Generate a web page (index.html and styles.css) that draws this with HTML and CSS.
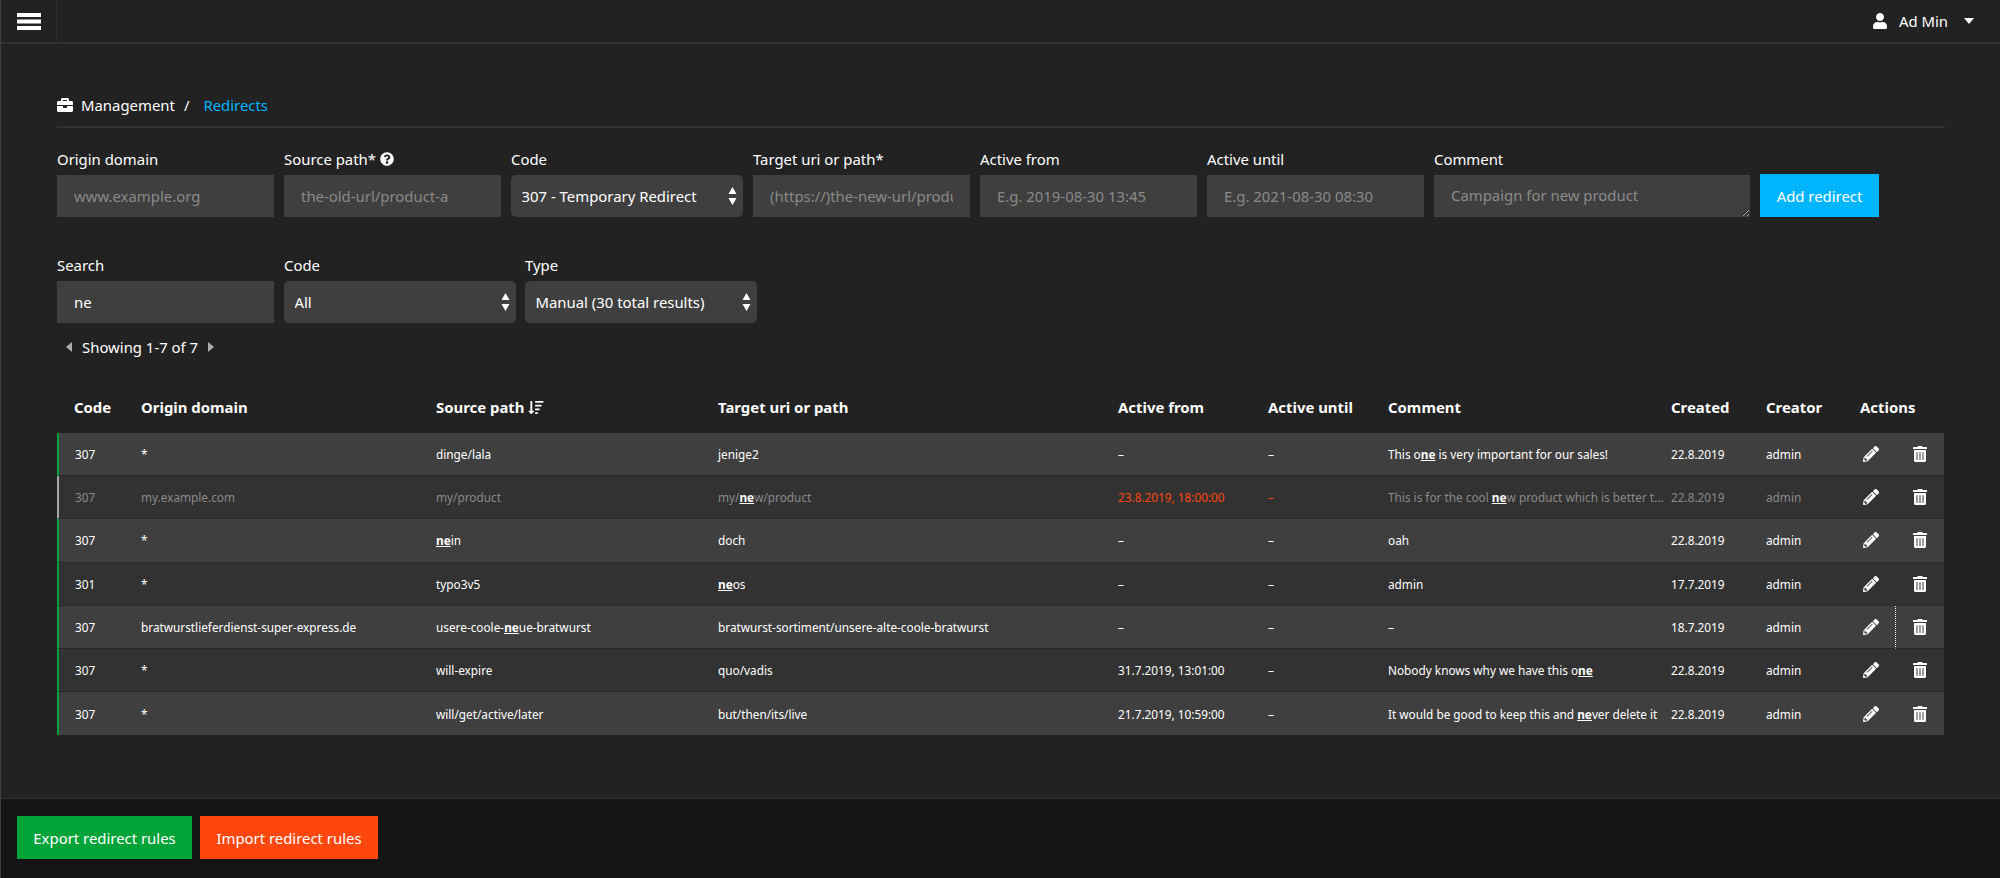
FILE: index.html
```html
<!DOCTYPE html>
<html lang="en">
<head>
<meta charset="utf-8">
<title>Redirects</title>
<link rel="stylesheet" href="styles.css">
</head>
<body>
<svg class="sprite" aria-hidden="true">
  <symbol id="i-pencil" viewBox="0 0 512 512"><path d="M497.9 142.1l-46.1 46.1c-4.7 4.7-12.3 4.7-17 0l-111-111c-4.7-4.7-4.7-12.3 0-17l46.1-46.1c18.7-18.7 49.1-18.7 67.9 0l60.1 60.1c18.8 18.7 18.8 49.1 0 67.9zM284.2 99.8L21.6 362.4.4 483.9c-2.9 16.4 11.4 30.6 27.8 27.8l121.5-21.3 262.6-262.6c4.7-4.7 4.7-12.3 0-17l-111-111c-4.8-4.7-12.4-4.7-17.1 0zM124.1 339.9c-5.5-5.5-5.5-14.3 0-19.8l154-154c5.5-5.5 14.3-5.5 19.8 0s5.5 14.3 0 19.8l-154 154c-5.5 5.5-14.3 5.5-19.8 0zM88 424h48v36.3l-64.5 11.3-31.1-31.1L51.7 376H88v48z"/></symbol>
  <symbol id="i-trash" viewBox="0 0 448 512"><path d="M32 464a48 48 0 0 0 48 48h288a48 48 0 0 0 48-48V128H32zm272-256a16 16 0 0 1 32 0v224a16 16 0 0 1-32 0zm-96 0a16 16 0 0 1 32 0v224a16 16 0 0 1-32 0zm-96 0a16 16 0 0 1 32 0v224a16 16 0 0 1-32 0zM432 32H312l-9.4-18.7A24 24 0 0 0 281.1 0H166.8a23.72 23.72 0 0 0-21.4 13.3L136 32H16A16 16 0 0 0 0 48v32a16 16 0 0 0 16 16h416a16 16 0 0 0 16-16V48a16 16 0 0 0-16-16z"/></symbol>
  <symbol id="i-stepper" viewBox="0 0 8 18"><path d="M4 0l4 7H0zM4 18L0 11h8z"/></symbol>
</svg>
<header class="topbar">
  <button class="menu-btn" type="button" aria-label="Menu">
    <svg class="menu-icon" viewBox="0 0 24 17"><rect width="24" height="4" y="0"/><rect width="24" height="4" y="6.5"/><rect width="24" height="4" y="13"/></svg>
  </button>
  <div class="user">
    <svg class="user-icon" viewBox="0 0 448 512"><path d="M224 256c70.7 0 128-57.3 128-128S294.7 0 224 0 96 57.3 96 128s57.3 128 128 128zm89.6 32h-16.7c-22.2 10.2-46.9 16-72.9 16s-50.6-5.8-72.9-16h-16.7C60.2 288 0 348.2 0 422.4V464c0 26.5 21.5 48 48 48h352c26.5 0 48-21.5 48-48v-41.6c0-74.2-60.2-134.4-134.4-134.4z"/></svg>
    <span class="user-name">Ad Min</span>
    <svg class="user-caret" viewBox="0 0 10 6"><path d="M0 0h10L5 6z"/></svg>
  </div>
</header>

<main class="content">
  <nav class="crumbs">
    <svg class="crumb-icon" viewBox="0 0 512 512"><path d="M320 336c0 8.84-7.16 16-16 16h-96c-8.84 0-16-7.16-16-16v-48H0v144c0 25.6 22.4 48 48 48h416c25.6 0 48-22.4 48-48V288H320v48zm144-208h-80V80c0-25.6-22.4-48-48-48H176c-25.6 0-48 22.4-48 48v48H48c-25.6 0-48 22.4-48 48v80h512v-80c0-25.6-22.4-48-48-48zm-144 0H192V96h128v32z"/></svg>
    <span class="crumb">Management</span>
    <span class="crumb-sep">/</span>
    <a class="crumb-link" href="#">Redirects</a>
  </nav>

  <form class="form-row add-row">
    <label class="field w-217"><span class="field-label">Origin domain</span><input class="input" placeholder="www.example.org"></label>
    <label class="field w-217"><span class="field-label">Source path* <svg class="help-icon" viewBox="0 0 512 512"><path d="M504 256c0 136.997-111.043 248-248 248S8 392.997 8 256C8 119.083 119.043 8 256 8s248 111.083 248 248zM262.655 90c-54.497 0-89.255 22.957-116.549 63.758-3.536 5.286-2.353 12.415 2.715 16.258l34.699 26.31c5.205 3.947 12.621 3.008 16.665-2.122 17.864-22.658 30.113-35.797 57.303-35.797 20.429 0 45.698 13.148 45.698 32.958 0 14.976-12.363 22.667-32.534 33.976C247.128 238.528 216 254.941 216 296v4c0 6.627 5.373 12 12 12h56c6.627 0 12-5.373 12-12v-1.333c0-28.462 83.186-29.647 83.186-106.667 0-58.002-60.165-102-116.531-102zM256 338c-25.365 0-46 20.635-46 46 0 25.364 20.635 46 46 46s46-20.636 46-46c0-25.365-20.635-46-46-46z"/></svg></span><input class="input" placeholder="the-old-url/product-a"></label>
    <label class="field w-232"><span class="field-label">Code</span>
      <span class="select-wrap"><select class="select"><option>307 - Temporary Redirect</option></select><svg class="stepper"><use href="#i-stepper"/></svg></span></label>
    <label class="field w-217"><span class="field-label">Target uri or path*</span><input class="input" placeholder="(https://)the-new-url/product-a"></label>
    <label class="field w-217"><span class="field-label">Active from</span><input class="input" placeholder="E.g. 2019-08-30 13:45"></label>
    <label class="field w-217"><span class="field-label">Active until</span><input class="input" placeholder="E.g. 2021-08-30 08:30"></label>
    <label class="field w-316"><span class="field-label">Comment</span><textarea class="input textarea" placeholder="Campaign for new product"></textarea></label>
    <button class="btn btn-blue" type="button">Add redirect</button>
  </form>

  <form class="form-row filter-row">
    <label class="field w-217"><span class="field-label">Search</span><input class="input" value="ne"></label>
    <label class="field w-232 tight"><span class="field-label">Code</span>
      <span class="select-wrap"><select class="select"><option>All</option></select><svg class="stepper"><use href="#i-stepper"/></svg></span></label>
    <label class="field w-232"><span class="field-label">Type</span>
      <span class="select-wrap"><select class="select"><option>Manual (30 total results)</option></select><svg class="stepper"><use href="#i-stepper"/></svg></span></label>
  </form>

  <div class="pager">
    <svg class="pager-arrow" viewBox="0 0 6 10"><path d="M6 0v10L0 5z"/></svg>
    <span class="pager-text">Showing 1-7 of 7</span>
    <svg class="pager-arrow" viewBox="0 0 6 10"><path d="M0 0v10l6-5z"/></svg>
  </div>

  <table class="table">
    <colgroup>
      <col class="c-code"><col class="c-origin"><col class="c-source"><col class="c-target"><col class="c-from"><col class="c-until"><col class="c-comment"><col class="c-created"><col class="c-creator"><col class="c-edit"><col class="c-del">
    </colgroup>
    <thead>
      <tr>
        <th class="first">Code</th>
        <th>Origin domain</th>
        <th>Source path <svg class="sort-icon" viewBox="0 0 512 512"><path d="M187.298 395.314l-79.984 80.002c-6.248 6.247-16.383 6.245-22.627 0L4.705 395.314C-5.365 385.244 1.807 368 16.019 368H64V48c0-8.837 7.163-16 16-16h32c8.837 0 16 7.163 16 16v320h47.984c14.241 0 21.363 17.264 11.314 27.314zM240 96h256c8.837 0 16-7.163 16-16V48c0-8.837-7.163-16-16-16H240c-8.837 0-16 7.163-16 16v32c0 8.837 7.163 16 16 16zm-16 112v-32c0-8.837 7.163-16 16-16h192c8.837 0 16 7.163 16 16v32c0 8.837-7.163 16-16 16H240c-8.837 0-16-7.163-16-16zm0 256v-32c0-8.837 7.163-16 16-16h64c8.837 0 16 7.163 16 16v32c0 8.837-7.163 16-16 16h-64c-8.837 0-16-7.163-16-16zm0-128v-32c0-8.837 7.163-16 16-16h128c8.837 0 16 7.163 16 16v32c0 8.837-7.163 16-16 16H240c-8.837 0-16-7.163-16-16z"/></svg></th>
        <th>Target uri or path</th>
        <th>Active from</th>
        <th>Active until</th>
        <th>Comment</th>
        <th>Created</th>
        <th>Creator</th>
        <th colspan="2">Actions</th>
      </tr>
    </thead>
    <tbody>
      <tr class="row">
        <td class="first">307</td><td>*</td><td>dinge/lala</td><td>jenige2</td><td>–</td><td>–</td>
        <td class="comment">This o<mark class="hit">ne</mark> is very important for our sales!</td><td>22.8.2019</td><td>admin</td>
        <td class="action edit"><svg class="pencil"><use href="#i-pencil"/></svg></td>
        <td class="action del"><svg class="trash"><use href="#i-trash"/></svg></td>
      </tr>
      <tr class="row inactive">
        <td class="first">307</td><td>my.example.com</td><td>my/product</td><td>my/<mark class="hit">ne</mark>w/product</td><td class="expired">23.8.2019, 18:00:00</td><td class="expired">–</td>
        <td class="comment"><div class="clip">This is for the cool <mark class="hit">ne</mark>w product which is better than the old one</div></td><td>22.8.2019</td><td>admin</td>
        <td class="action edit"><svg class="pencil"><use href="#i-pencil"/></svg></td>
        <td class="action del"><svg class="trash"><use href="#i-trash"/></svg></td>
      </tr>
      <tr class="row">
        <td class="first">307</td><td>*</td><td><mark class="hit">ne</mark>in</td><td>doch</td><td>–</td><td>–</td>
        <td class="comment">oah</td><td>22.8.2019</td><td>admin</td>
        <td class="action edit"><svg class="pencil"><use href="#i-pencil"/></svg></td>
        <td class="action del"><svg class="trash"><use href="#i-trash"/></svg></td>
      </tr>
      <tr class="row">
        <td class="first">301</td><td>*</td><td>typo3v5</td><td><mark class="hit">ne</mark>os</td><td>–</td><td>–</td>
        <td class="comment">admin</td><td>17.7.2019</td><td>admin</td>
        <td class="action edit"><svg class="pencil"><use href="#i-pencil"/></svg></td>
        <td class="action del"><svg class="trash"><use href="#i-trash"/></svg></td>
      </tr>
      <tr class="row">
        <td class="first">307</td><td>bratwurstlieferdienst-super-express.de</td><td>usere-coole-<mark class="hit">ne</mark>ue-bratwurst</td><td>bratwurst-sortiment/unsere-alte-coole-bratwurst</td><td>–</td><td>–</td>
        <td class="comment">–</td><td>18.7.2019</td><td>admin</td>
        <td class="action edit"><svg class="pencil"><use href="#i-pencil"/></svg></td>
        <td class="action del focus"><svg class="trash"><use href="#i-trash"/></svg></td>
      </tr>
      <tr class="row">
        <td class="first">307</td><td>*</td><td>will-expire</td><td>quo/vadis</td><td>31.7.2019, 13:01:00</td><td>–</td>
        <td class="comment">Nobody knows why we have this o<mark class="hit">ne</mark></td><td>22.8.2019</td><td>admin</td>
        <td class="action edit"><svg class="pencil"><use href="#i-pencil"/></svg></td>
        <td class="action del"><svg class="trash"><use href="#i-trash"/></svg></td>
      </tr>
      <tr class="row">
        <td class="first">307</td><td>*</td><td>will/get/active/later</td><td>but/then/its/live</td><td>21.7.2019, 10:59:00</td><td>–</td>
        <td class="comment">It would be good to keep this and <mark class="hit">ne</mark>ver delete it</td><td>22.8.2019</td><td>admin</td>
        <td class="action edit"><svg class="pencil"><use href="#i-pencil"/></svg></td>
        <td class="action del"><svg class="trash"><use href="#i-trash"/></svg></td>
      </tr>
    </tbody>
  </table>
</main>

<footer class="footer">
  <button class="btn btn-green" type="button">Export redirect rules</button>
  <button class="btn btn-orange" type="button">Import redirect rules</button>
</footer>
</body>
</html>
```
FILE: styles.css
```css
* { box-sizing: border-box; }
html, body { height: 100%; }
body {
  margin: 0;
  height: 878px;
  display: flex;
  flex-direction: column;
  overflow: hidden;
  background: #222;
  color: #fff;
  font-family: "Noto Sans", sans-serif;
  font-size: 14.9px;
  line-height: 20px;
  border-left: 1px solid #3f3f3f;
}
.sprite { display: none; }

/* top bar */
.topbar {
  flex: none;
  height: 44px;
  display: flex;
  align-items: stretch;
  justify-content: space-between;
  border-bottom: 2px solid #323232;
}
.menu-btn {
  width: 56px;
  padding: 0;
  background: none;
  border: 0;
  border-right: 1px solid #323232;
  display: flex;
  align-items: center;
  justify-content: center;
  margin-right: 0;
}
.menu-icon { width: 24px; height: 17px; fill: #fff; }
.user { display: flex; align-items: center; padding-right: 26px; }
.user-icon { width: 14px; height: 16px; fill: #fff; margin-right: 12px; }
.user-name { margin-right: 16px; }
.user-caret { width: 10px; height: 6px; fill: #fff; }

/* main */
.content { flex: 1; min-height: 0; padding: 50px 55px 0 56px; }
.crumbs {
  height: 34px;
  display: flex;
  align-items: flex-start;
  border-bottom: 2px solid #323232;
  padding-top: 1px;
}
.crumb-icon { width: 16px; height: 16px; fill: #fff; margin: 2px 8px 0 0; }
.crumb-sep { margin: 0 14px 0 9px; }
.crumb-link { color: #00b5ff; text-decoration: none; }

.form-row { display: flex; align-items: flex-end; }
.add-row { margin-top: 21px; }
.filter-row { margin-top: 38px; }
.field { display: flex; flex-direction: column; flex: none; margin-right: 10px; }
.field.tight { margin-right: 9px; }
.w-217 { width: 217px; }
.w-232 { width: 232px; }
.w-316 { width: 316px; }
.field-label { height: 20px; margin-bottom: 6px; display: flex; align-items: center; gap: 4px; }
.help-icon { width: 14px; height: 14px; fill: #fff; }
.input {
  height: 42px;
  width: 100%;
  padding: 0 17px;
  background: #3f3f3f;
  border: 0;
  color: #fff;
  font: inherit;
  outline: 0;
  display: block;
}
.input::placeholder { color: #8a8a8a; opacity: 1; }
.textarea { padding-top: 10px; resize: vertical; line-height: 20px; }
.select-wrap { position: relative; display: block; }
.select {
  display: block;
  width: 100%;
  height: 42px;
  padding: 0 24px 0 10.5px;
  background: #3f3f3f;
  border: 0;
  border-radius: 5px;
  color: #fff;
  font: inherit;
  appearance: none;
}
.stepper {
  position: absolute;
  right: 6px;
  top: 12px;
  width: 9px;
  height: 18px;
  fill: #fff;
  pointer-events: none;
}
.btn {
  height: 43px;
  padding: 0;
  border: 0;
  color: #fff;
  font: inherit;
}
.btn-blue { background: #00b5ff; width: 119px; }
.btn-green { background: #00a338; width: 175px; }
.btn-orange { background: #ff460d; width: 178px; margin-left: 8px; }

.pager { height: 20px; margin-top: 14px; display: flex; align-items: center; padding-left: 9px; }
.pager-arrow { width: 6px; height: 10px; fill: #adadad; }
.pager-text { margin: 0 10px 0 10px; }

/* table */
.table {
  width: 1887px;
  margin-top: 30px;
  table-layout: fixed;
  border-collapse: separate;
  border-spacing: 0;
  font-size: 11.8px;
  line-height: 16px;
}
.c-code { width: 76px; }
.c-origin { width: 295px; }
.c-source { width: 282px; }
.c-target { width: 400px; }
.c-from { width: 150px; }
.c-until { width: 120px; }
.c-comment { width: 283px; }
.c-created { width: 95px; }
.c-creator { width: 94px; }
.c-edit { width: 43px; }
.c-del { width: 49px; }
th {
  height: 46px;
  padding: 0 8px 6px;
  text-align: left;
  font-size: 14.9px;
  font-weight: 700;
  vertical-align: middle;
}
th.first { padding-left: 17px; }
.sort-icon { width: 16px; height: 15px; fill: #fff; vertical-align: -2px; }
td {
  height: 43.2px;
  padding: 0 8px;
  border-bottom: 1px solid #2a2a2a;
  white-space: nowrap;
  vertical-align: middle;
}
.row:nth-child(odd) td { background: #3f3f3f; }
.row:nth-child(even) td { background: #323232; }
td.first { padding-left: 16px; border-left: 2px solid #00a338; }
.row:last-child td { border-bottom: 0; }
.inactive td { color: #8a8a8a; }
.inactive td.first { border-left-color: #a5a5a5; }
.inactive td.expired { color: #ff460d; }
.comment { padding-right: 0; }
.clip { width: 277px; overflow: hidden; text-overflow: ellipsis; }
.hit { background: none; color: #fff; font-weight: 700; text-decoration: underline; }
.action { padding: 0; }
.edit { padding-left: 11px; }
.del { padding-left: 18px; }
.focus { border-left: 1px dotted #fff; padding-left: 17px; }
.pencil { width: 16px; height: 16px; fill: #fff; display: block; }
.trash { width: 14px; height: 16px; fill: #fff; display: block; }

/* footer */
.footer {
  flex: none;
  height: 80px;
  background: #141414;
  border-top: 1px solid #323232;
  display: flex;
  align-items: center;
  padding: 0 0 2px 16px;
}
```
